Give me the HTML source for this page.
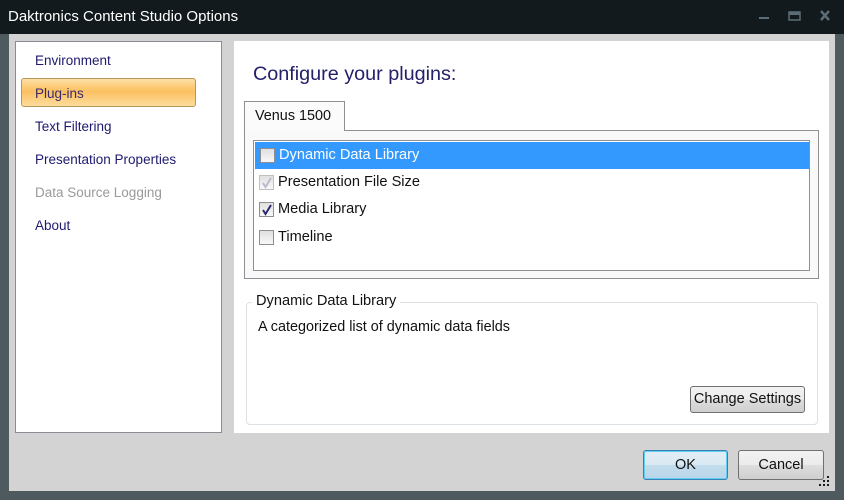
<!DOCTYPE html>
<html><head><meta charset="utf-8"><style>
*{margin:0;padding:0;box-sizing:border-box}
body{width:844px;height:500px;background:#4e5a5e;position:relative;overflow:hidden;font-family:"Liberation Sans",sans-serif}
.title{position:absolute;left:0;top:0;width:844px;height:34px;background:#121a1e;color:#fff;font-size:15px;line-height:34px;padding-left:8px}
.ctl{position:absolute;top:0;height:34px}
.client{position:absolute;left:9px;top:34px;width:826px;height:457px;background:#d3d3d3}
.side{position:absolute;left:15px;top:41px;width:207px;height:392px;background:#fff;border:1px solid #8a8c94}
.nav{position:absolute;left:19px;font-size:13.5px;color:#1e1a6e}
.sel{position:absolute;left:5px;top:36px;width:175px;height:29px;border:1px solid #b8965a;border-radius:3px;background:linear-gradient(#fde0a6 0%,#fbc060 45%,#fddc9c 100%)}
.main{position:absolute;left:234px;top:41px;width:595px;height:392px;background:#fff}
.h{position:absolute;left:19px;top:22px;font-size:19.8px;color:#24206a}
.tab{position:absolute;left:10px;top:60px;width:101px;height:30px;border:1px solid #8d8f95;border-bottom:none;background:#fbfbfb;font-size:14.4px;line-height:28px;padding-left:10px;color:#111;z-index:2}
.tp{position:absolute;left:10px;top:89px;width:575px;height:149px;border:1px solid #8d8f95;background:#f9f9f9}
.lb{position:absolute;left:8px;top:9px;width:557px;height:131px;border:1px solid #8d8f95;background:#fff}
.row{position:absolute;left:0;height:27px;width:554px;font-size:14.6px;line-height:27px;padding-left:24px;color:#111}
.row.s{background:#3399ff;color:#fff;left:1px;top:1px}
.cb{position:absolute;left:5px;top:6px;width:15px;height:15px;border:1px solid #8f8f8f;background:linear-gradient(#e0e0e0,#f8f8f8)}
.gb{position:absolute;left:12px;top:261px;width:572px;height:123px;border:1px solid #dce1e6;border-radius:4px}
.gl{position:absolute;left:18px;top:252px;background:#fff;padding:0 4px;font-size:14.6px;color:#111}
.desc{position:absolute;left:24px;top:278px;font-size:14.4px;color:#111}
.btn{position:absolute;border:1px solid #707070;border-radius:3px;background:linear-gradient(#f2f2f2 0%,#ebebeb 50%,#dddddd 51%,#cfcfcf 100%);font-size:14.5px;text-align:center;color:#111}
</style></head><body>
<div class="title">Daktronics Content Studio Options</div>
<svg class="ctl" style="left:740px" width="104" height="34">
<rect x="19" y="17" width="10" height="2" fill="#5c6c76"/>
<rect x="49" y="12" width="11" height="8" fill="none" stroke="#5c6c76" stroke-width="1.5"/><rect x="49" y="12" width="11" height="3" fill="#5c6c76"/>
<path d="M81 11 L89 20 M89 11 L81 20" stroke="#5c6c76" stroke-width="2.5"/>
</svg>
<div class="client"></div>
<div class="side">
<div class="sel"></div>
<div class="nav" style="top:11px">Environment</div>
<div class="nav" style="top:44px;color:#3a2a6a">Plug-ins</div>
<div class="nav" style="top:77px">Text Filtering</div>
<div class="nav" style="top:110px">Presentation Properties</div>
<div class="nav" style="top:143px;color:#9a9a9a">Data Source Logging</div>
<div class="nav" style="top:176px">About</div>
</div>
<div class="main">
<div class="h">Configure your plugins:</div>
<div class="tab">Venus 1500</div>
<div class="tp"><div class="lb">
<div class="row s"><div class="cb"></div>Dynamic Data Library</div>
<div class="row" style="top:28px"><div class="cb" style="border-color:#c0c0c0"></div><svg style="position:absolute;left:7px;top:8px" width="12" height="12"><path d="M2 6 L4.5 10 L10 1" stroke="#b8bccc" stroke-width="2" fill="none"/></svg>Presentation File Size</div>
<div class="row" style="top:55px"><div class="cb"></div><svg style="position:absolute;left:7px;top:8px" width="12" height="12"><path d="M2 6 L4.5 10 L10 1" stroke="#2b2a6e" stroke-width="2" fill="none"/></svg>Media Library</div>
<div class="row" style="top:83px"><div class="cb"></div>Timeline</div>
</div></div>
<div class="gb"></div>
<div class="gl">Dynamic Data Library</div>
<div class="desc">A categorized list of dynamic data fields</div>
<div class="btn" style="left:456px;top:345px;width:115px;height:27px;line-height:25px">Change Settings</div>
</div>
<div class="btn" style="left:643px;top:450px;width:85px;height:30px;line-height:28px;border-color:#3c7fb1;box-shadow:inset 0 0 0 1px #5fd0f5;background:linear-gradient(#e3eef6 0%,#d9e9f4 50%,#c2dcec 51%,#b9d6e9 100%)">OK</div>
<div class="btn" style="left:738px;top:450px;width:86px;height:30px;line-height:28px">Cancel</div>
<svg style="position:absolute;left:818px;top:474px" width="16" height="16" fill="#1a1a1a">
<rect x="9" y="2" width="2" height="2"/><rect x="5" y="6" width="2" height="2"/><rect x="9" y="6" width="2" height="2"/>
<rect x="1" y="10" width="2" height="2"/><rect x="5" y="10" width="2" height="2"/><rect x="9" y="10" width="2" height="2"/>
</svg>
</body></html>
